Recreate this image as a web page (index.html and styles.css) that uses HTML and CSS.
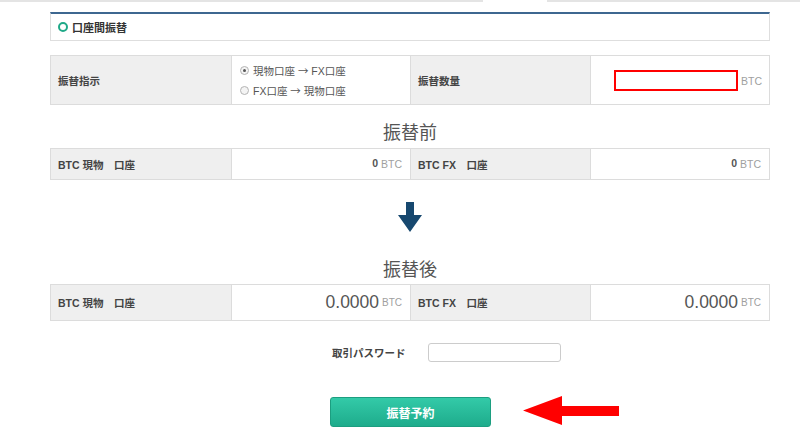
FILE: index.html
```html
<!DOCTYPE html>
<html lang="ja">
<head>
    <meta charset="UTF-8">
    <meta name="viewport" content="width=device-width, initial-scale=1.0">
    <title>口座間振替</title>
    <link rel="stylesheet" href="styles.css">
</head>
<body>
    <!-- tab strip (bottom edge only) -->
    <div class="tab-line">
        <div class="tab-line-left"></div>
        <div class="tab-line-gap"></div>
        <div class="tab-line-right"></div>
    </div>

    <div class="container">
        <div class="panel-head">
            <span class="ring"></span>
            <h1 class="panel-title">口座間振替</h1>
        </div>

        <!-- Transfer instruction -->
        <table class="grid grid-order">
            <tr>
                <th>振替指示</th>
                <td class="options">
                    <label class="radio"><span class="dot checked"></span>現物口座 <span class="arr">→</span> FX口座</label>
                    <label class="radio"><span class="dot"></span>FX口座 <span class="arr">→</span> 現物口座</label>
                </td>
                <th>振替数量</th>
                <td class="amount">
                    <input type="text" class="amount-input">
                    <span class="unit">BTC</span>
                </td>
            </tr>
        </table>

        <h2 class="section-title before">振替前</h2>
        <table class="grid grid-small">
            <tr>
                <th>BTC 現物　口座</th>
                <td class="value"><b>0</b> <span class="unit">BTC</span></td>
                <th>BTC FX　口座</th>
                <td class="value"><b>0</b> <span class="unit">BTC</span></td>
            </tr>
        </table>

        <div class="down-arrow">
            <svg width="24" height="30" viewBox="0 0 24 30">
                <path d="M8 0 H16 V13 H24 L12 30 L0 13 H8 Z" fill="#17486f"/>
            </svg>
        </div>

        <h2 class="section-title after">振替後</h2>
        <table class="grid grid-large">
            <tr>
                <th>BTC 現物　口座</th>
                <td class="value"><span class="big">0.0000</span> <span class="unit small">BTC</span></td>
                <th>BTC FX　口座</th>
                <td class="value"><span class="big">0.0000</span> <span class="unit small">BTC</span></td>
            </tr>
        </table>

        <div class="password-row">
            <label class="password-label">取引パスワード</label>
            <input type="password" class="password-input">
        </div>

        <div class="submit-row">
            <button class="submit-btn">振替予約</button>
            <svg class="hint-arrow" width="96" height="29" viewBox="0 0 96 29">
                <path d="M0 14.5 L39 0 V10 H96 V20 H39 V29 Z" fill="#ff0000"/>
            </svg>
        </div>
    </div>
</body>
</html>
```

FILE: styles.css
```css
/* Reset and base styles */
* {
    margin: 0;
    padding: 0;
    box-sizing: border-box;
}

body {
    background: #fff;
    font-family: 'Liberation Sans', 'Noto Sans CJK JP', sans-serif;
    color: #444;
    font-size: 10.5px;
}

/* Tab strip */
.tab-line {
    display: flex;
    height: 2px;
}

.tab-line-left {
    width: 483px;
    background: #e4e4e4;
}

.tab-line-gap {
    width: 64px;
}

.tab-line-right {
    flex: 1;
    background: #e4e4e4;
}

.container {
    margin: 0 30px 0 50px;
    padding-top: 10px;
}

/* Panel header */
.panel-head {
    display: flex;
    align-items: center;
    height: 29px;
    border: 1px solid #dedede;
    border-top: 2px solid #3d6790;
    padding-left: 7px;
}

.ring {
    width: 10px;
    height: 10px;
    border: 2.5px solid #1fa988;
    border-radius: 50%;
    margin-right: 4px;
}

.panel-title {
    font-size: 11px;
    font-weight: bold;
    color: #333;
}

/* Tables */
.grid {
    width: 720px;
    border-collapse: collapse;
    table-layout: fixed;
    margin-top: 14px;
}

.grid th,
.grid td {
    border: 1px solid #dcdcdc;
}

.grid th {
    background: #efefef;
    text-align: left;
    font-weight: bold;
    font-size: 10.5px;
    color: #444;
    padding-left: 7px;
}

.grid th:nth-child(1) { width: 181px; }
.grid td:nth-child(2) { width: 179px; }
.grid th:nth-child(3) { width: 180px; }

.grid-order tr { height: 49px; }
.grid-small tr { height: 31px; }
.grid-large tr { height: 36px; }

.options {
    padding-left: 8px;
}

.radio {
    display: flex;
    align-items: center;
    height: 20px;
    color: #555;
    font-size: 10.5px;
    white-space: pre;
}

.arr {
    font-family: 'Noto Sans CJK JP', sans-serif;
}

.dot {
    width: 9px;
    height: 9px;
    border: 1px solid #b4b4b4;
    border-radius: 50%;
    background: #f4f4f4;
    margin-right: 4px;
    position: relative;
}

.dot.checked::after {
    content: '';
    position: absolute;
    left: 2px;
    top: 2px;
    width: 3px;
    height: 3px;
    border-radius: 50%;
    background: #555;
}

.amount {
    text-align: right;
    padding-right: 7px;
}

.amount-input {
    width: 124px;
    height: 21px;
    border: 2px solid #f00;
    vertical-align: middle;
}

.unit {
    color: #a0a0a0;
    font-size: 10.5px;
    vertical-align: middle;
}

.unit.small {
    font-size: 10px;
}

.value {
    text-align: right;
    padding-right: 8px;
    color: #555;
}

.value b {
    color: #555;
}

.big {
    font-size: 17.5px;
    color: #555;
    vertical-align: middle;
}

/* Section headings */
.section-title {
    text-align: center;
    font-weight: normal;
    font-size: 18px;
    line-height: 24px;
    color: #555;
    width: 720px;
}

.section-title.before {
    margin-top: 16px;
}

.section-title.after {
    margin-top: 26px;
}

.section-title + .grid {
    margin-top: 3px;
}

.section-title.after + .grid {
    margin-top: 2px;
}

.down-arrow {
    width: 720px;
    display: flex;
    justify-content: center;
    margin-top: 22px;
    height: 30px;
}

/* Password */
.password-row {
    display: flex;
    align-items: center;
    margin-top: 22px;
    padding-left: 282px;
}

.password-label {
    font-weight: bold;
    font-size: 10.5px;
    color: #444;
    width: 96px;
}

.password-input {
    width: 133px;
    height: 19px;
    border: 1px solid #ccc;
    border-radius: 3px;
}

/* Submit */
.submit-row {
    position: relative;
    width: 720px;
    display: flex;
    justify-content: center;
    margin-top: 35px;
}

.submit-btn {
    width: 161px;
    height: 30px;
    border: 1px solid #1c9e80;
    border-radius: 3px;
    background: linear-gradient(#33caa8, #1eac8c);
    color: #fff;
    font-weight: bold;
    font-size: 12px;
    font-family: 'Liberation Sans', 'Noto Sans CJK JP', sans-serif;
    margin-left: 1px;
}

.hint-arrow {
    position: absolute;
    left: 473px;
    top: -1px;
}
```
